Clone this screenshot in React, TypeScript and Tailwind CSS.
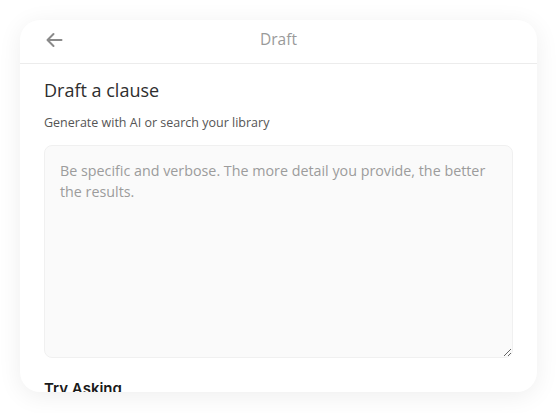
const BackArrow = () => (
  <svg width="18" height="16" viewBox="0 0 18 16" fill="none" className="text-[#8a8a8a]">
    <path d="M16.5 8H2.5M8.5 2L2.5 8L8.5 14" stroke="currentColor" strokeWidth="2" strokeLinecap="round" strokeLinejoin="round" />
  </svg>
);

const App = () => {
  return (
    <div className="min-h-screen bg-white px-5 pt-5 font-['Open_Sans',sans-serif]">
      <div className="h-[372px] overflow-hidden rounded-[20px] bg-white shadow-[0_4px_24px_rgba(0,0,0,0.07)]">
        {/* Header */}
        <div className="grid h-[44px] grid-cols-[1fr_auto_1fr] items-center border-b border-[#ececec] px-[25px] pb-1">
          <BackArrow />
          <span className="text-[15.5px] text-[#9a9a9a]">Draft</span>
          <span />
        </div>
        {/* Body */}
        <div className="px-6 pt-[14px]">
          <h2 className="text-[18px] leading-[24px] text-[#2e2e2e]">Draft a clause</h2>
          <p className="mt-[12px] text-[12.5px] leading-[17px] text-[#555]">
            Generate with AI or search your library
          </p>
          <textarea
            className="mt-[14px] block h-[213px] w-full rounded-[8px] border border-[#f0f0f0] bg-[#fafafa] px-[15px] pt-[14px] text-[14.3px] leading-[21px] text-[#333] outline-none placeholder:text-[#9c9c9c]"
            placeholder="Be specific and verbose. The more detail you provide, the better the results."
          />
          <h3 className="mt-[21px] font-['Inter',sans-serif] text-[15px] leading-[20px] font-semibold text-[#1a1a1a]">
            Try Asking
          </h3>
        </div>
      </div>
    </div>
  );
};

export default App;
